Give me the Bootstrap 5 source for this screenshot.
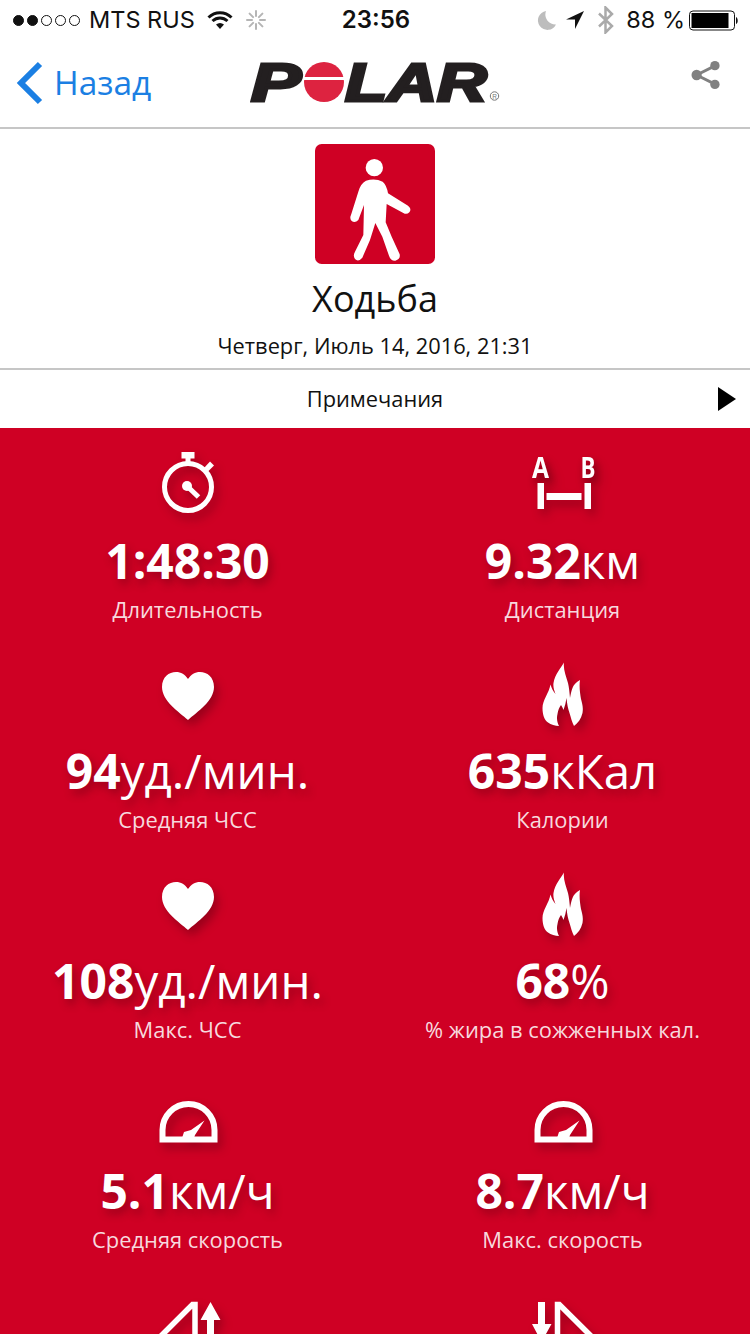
<!DOCTYPE html>
<html lang="ru">
<head>
  <meta charset="UTF-8">
  <title>Polar - Ходьба</title>
  <link href="https://cdn.jsdelivr.net/npm/bootstrap@5.3.0/dist/css/bootstrap.min.css" rel="stylesheet">
  <style>
    html, body {
      height: 1334px;
      overflow: hidden;
    }
    body {
      font-family: "Open Sans", "Liberation Sans", sans-serif;
      color: #111;
      background-color: #fff;
    }
    .status-bar {
      height: 40px;
      padding: 0 11px 0 13px;
      font-family: Inter, "Liberation Sans", sans-serif;
      font-size: 23.5px;
      color: #111;
    }
    .status-side {
      flex: 1 1 0;
    }
    .status-time {
      font-weight: 600;
      font-size: 24px;
    }
    .signal-dot {
      width: 11px;
      height: 11px;
      margin-right: 3px;
      border: 1px solid #111;
      border-radius: 50%;
    }
    .signal-dot.on {
      background-color: #111;
    }
    .carrier-name {
      margin-left: 6px;
    }
    .wifi-icon {
      margin-left: 12px;
    }
    .spin-icon {
      margin-left: 13px;
    }
    .bt-icon {
      margin-left: 12px;
    }
    .battery-pct {
      margin-left: 11px;
    }
    .top-nav {
      height: 89px;
      padding: 0 29px 2px 16px;
      border-bottom: 2px solid #c6c6c6;
    }
    .back-link {
      width: 234px;
      flex: none;
      font-size: 33.5px;
      color: #1b7fe3;
      text-decoration: none;
    }
    .polar-logo {
      flex: none;
    }
    .share-icon {
      margin-bottom: 16px;
    }
    .activity-head {
      height: 239px;
      padding-top: 15px;
    }
    .activity-icon {
      width: 120px;
      height: 120px;
      display: block;
    }
    .activity-name {
      margin: 12px 0 0;
      font-size: 36px;
      line-height: 46px;
      font-weight: 400;
    }
    .activity-date {
      margin-top: 9px;
      font-size: 21.8px;
      line-height: 30px;
    }
    .notes-row {
      height: 60px;
      padding-right: 14px;
      border-top: 2px solid #c6c6c6;
      font-size: 21.8px;
    }
    .notes-label {
      left: 0;
      right: 0;
      margin-top: 1px;
    }
    .notes-arrow {
      width: 0;
      height: 0;
      border-top: 12px solid transparent;
      border-bottom: 12px solid transparent;
      border-left: 18px solid #000;
    }
    .metrics {
      height: 906px;
      overflow: hidden;
      background-color: #cf0024;
      color: #fff;
      text-shadow: 3px 5px 8px rgba(90, 0, 15, .45);
    }
    .metric {
      height: 210px;
      padding-top: 22px;
    }
    .metric-icon {
      display: block;
      width: 70px;
      height: 84px;
      margin: 0 auto -2px;
      overflow: visible;
      filter: drop-shadow(4px 6px 5px rgba(90, 0, 15, .45));
    }
    .metric-value {
      font-size: 48px;
      line-height: 58px;
      font-weight: 700;
      white-space: nowrap;
    }
    .metric-unit {
      font-size: 47.5px;
      font-weight: 400;
    }
    .metric-label {
      font-size: 21.9px;
      line-height: 40px;
      color: #f7d9de;
      text-shadow: none;
      white-space: nowrap;
    }
  </style>
</head>
<body>

  <div class="status-bar d-flex align-items-center">
    <div class="status-side d-flex align-items-center">
      <span class="signal-dot on"></span><span class="signal-dot on"></span><span class="signal-dot"></span><span class="signal-dot"></span><span class="signal-dot"></span>
      <span class="carrier-name">MTS RUS</span>
      <svg class="wifi-icon" width="26" height="20" viewBox="0 0 26 20"><path d="M1.500 7.500C8 1 18 1 24.500 7.500M5.500 11C10 7 16 7 20.500 11" fill="none" stroke="#111" stroke-width="3"/><path d="M9 14.500C11.500 12.500 14.500 12.500 17 14.500L13 19Z" fill="#111"/></svg>
      <svg class="spin-icon" width="20" height="20" viewBox="0 0 20 20" stroke="#b5b5b5" stroke-width="2" stroke-linecap="round"><path d="M10 1v5M10 14v5M1 10h5M14 10h5M3.600 3.600l3.500 3.500M12.900 12.900l3.500 3.500M3.600 16.400l3.500-3.500M12.900 7.100l3.500-3.500"/></svg>
    </div>
    <div class="status-time">23:56</div>
    <div class="status-side d-flex align-items-center justify-content-end">
      <svg width="20" height="20" viewBox="0 0 20 20"><path d="M9 1a9.500 9.500 0 1 0 10 13.500A10 10 0 0 1 9 1Z" fill="#bdbdbd"/></svg>
      <svg class="ms-2" width="20" height="20" viewBox="0 0 20 20"><path d="M19 1 1 9.500h9v9.500L19 1Z" fill="#111"/></svg>
      <svg class="bt-icon" width="18" height="28" viewBox="0 0 18 28"><path d="M2 7.500 15 20 8.500 26.500V1.500L15 8 2 20.500" fill="none" stroke="#aaa" stroke-width="2.500"/></svg>
      <span class="battery-pct">88 %</span>
      <svg class="ms-1" width="50" height="21" viewBox="0 0 50 21"><rect x=".5" y="1" width="45" height="19" rx="3.500" fill="none" stroke="#111"/><rect x="2.500" y="3" width="37" height="15" fill="#000"/><path d="M47 7c2 .5 2.500 6.500 0 7Z" fill="#111"/></svg>
    </div>
  </div>

  <nav class="top-nav d-flex align-items-center">
    <a class="back-link d-flex align-items-center" href="#">
      <svg class="me-2" width="30" height="46" viewBox="0 0 30 46"><path d="M24 4 5 23l19 19" fill="none" stroke="#1b7fe3" stroke-width="6"/></svg>
      Назад
    </a>
    <svg class="polar-logo" width="252" height="64" viewBox="0 -10 252 64">
      <g font-family="Liberation Sans, sans-serif" font-weight="700" font-style="italic" font-size="54" fill="#231f20" stroke="#231f20" stroke-width="3">
        <text x="1" y="40" textLength="50" lengthAdjust="spacingAndGlyphs">P</text>
        <text x="95" y="40" textLength="142" lengthAdjust="spacingAndGlyphs">LAR</text>
      </g>
      <circle cx="74" cy="21" r="20" fill="#dd2340"/>
      <rect x="54" y="16" width="40" height="3" fill="#fff"/>
      <circle cx="244.500" cy="35" r="4.200" fill="none" stroke="#777"/>
      <text x="244.500" y="37.500" text-anchor="middle" font-family="Liberation Sans, sans-serif" font-size="6.500" fill="#777">R</text>
    </svg>
    <div class="flex-fill d-flex justify-content-end">
      <svg class="share-icon" width="30" height="30" viewBox="0 0 32 32"><path d="M26 6 6 16l20 10" fill="none" stroke="#808080" stroke-width="3"/><circle cx="25.500" cy="6" r="5" fill="#808080"/><circle cx="6" cy="16" r="5.500" fill="#808080"/><circle cx="25.500" cy="26" r="5" fill="#808080"/></svg>
    </div>
  </nav>

  <header class="activity-head d-flex flex-column align-items-center text-center">
    <svg class="activity-icon" viewBox="75 27 360 360">
      <rect x="75" y="27" width="360" height="360" rx="20" fill="#cf0024"/>
      <circle cx="253" cy="98" r="26" fill="#fff"/>
      <path d="M228 137Q255 128 278 140 290 150 294 175L354 212Q366 222 358 232 350 240 340 234L290 207 287 262 305 305 329 358Q332 372 316 377 302 378 297 362L277 305 256 264 240 315 217 368Q205 382 195 372 188 362 195 350L220 300 222 210 205 255Q195 265 185 258 178 250 183 240L205 170Q212 145 228 137Z" fill="#fff"/>
    </svg>
    <h1 class="activity-name">Ходьба</h1>
    <div class="activity-date">Четверг, Июль 14, 2016, 21:31</div>
  </header>

  <div class="notes-row position-relative d-flex align-items-center justify-content-end">
    <span class="notes-label position-absolute text-center">Примечания</span>
    <span class="notes-arrow"></span>
  </div>

  <main class="metrics">
    <div class="row g-0 text-center">
      <div class="col-6 metric">
        <svg class="metric-icon" viewBox="0 0 70 84">
          <g fill="#fff"><rect x="28.500" y="2" width="13" height="6.500"/><rect x="32.500" y="8" width="5" height="7"/>
          <path d="M51 18l6-6.500 4 4-6 6Z"/><circle cx="34" cy="36" r="5"/></g>
          <circle cx="35" cy="37" r="23.500" fill="none" stroke="#fff" stroke-width="5"/>
          <path d="M35 37 45.500 47" stroke="#fff" stroke-width="5"/>
        </svg>
        <div class="metric-value">1:48:30</div>
        <div class="metric-label">Длительность</div>
      </div>
      <div class="col-6 metric">
        <svg class="metric-icon" viewBox="0 0 70 84">
          <text x="12.500" y="28" text-anchor="middle" font-family="Open Sans, sans-serif" font-weight="700" font-size="29" fill="#fff" textLength="17" lengthAdjust="spacingAndGlyphs">A</text>
          <text x="60" y="28" text-anchor="middle" font-family="Open Sans, sans-serif" font-weight="700" font-size="29" fill="#fff" textLength="15" lengthAdjust="spacingAndGlyphs">B</text>
          <path d="M9.500 33h6.500v26H9.500ZM56.500 33H63v26h-6.500ZM18.500 43H53.500v7H18.500Z" fill="#fff"/>
        </svg>
        <div class="metric-value">9.32<span class="metric-unit">км</span></div>
        <div class="metric-label">Дистанция</div>
      </div>
      <div class="col-6 metric">
        <svg class="metric-icon" viewBox="0 0 70 84">
          <path d="M35 60C26 52 9 41 9 27 9 17 16 12 23 12c5 0 9 2.500 12 7 3-4.500 7-7 12-7 7 0 14 5 14 15 0 14-17 25-26 33Z" fill="#fff"/>
        </svg>
        <div class="metric-value">94<span class="metric-unit">уд./мин.</span></div>
        <div class="metric-label">Средняя ЧСС</div>
      </div>
      <div class="col-6 metric">
        <svg class="metric-icon" viewBox="0 0 70 84">
          <path d="M36 2.500C33 8 27 14 25.500 23 25 27 26 30 27.500 34 25 31 23.500 28 22.500 24.500 21 33 14.500 40 14.500 48 14.500 55 16.500 60 20 62.500 23 64.500 27 66 31 66 29 62 28.500 58 29.500 54 30 50 31.500 47 33 45 34 47 35 48 35.500 50 37 46 38 42 38.500 38 39 44 40 49 41.500 53 43 58 44 62 46 66 50 63 53 59 54.500 53 55.500 47 54 43 53 39 52 33 51 26 52 20 48 22 45.500 25 44.500 28 43 32 42.500 35 42 38 41.500 32 41 27 40 23 38 16 35 9 36 2.500Z" fill="#fff"/>
        </svg>
        <div class="metric-value">635<span class="metric-unit">кКал</span></div>
        <div class="metric-label">Калории</div>
      </div>
      <div class="col-6 metric">
        <svg class="metric-icon" viewBox="0 0 70 84">
          <path d="M35 60C26 52 9 41 9 27 9 17 16 12 23 12c5 0 9 2.500 12 7 3-4.500 7-7 12-7 7 0 14 5 14 15 0 14-17 25-26 33Z" fill="#fff"/>
        </svg>
        <div class="metric-value">108<span class="metric-unit">уд./мин.</span></div>
        <div class="metric-label">Макс. ЧСС</div>
      </div>
      <div class="col-6 metric">
        <svg class="metric-icon" viewBox="0 0 70 84">
          <path d="M36 2.500C33 8 27 14 25.500 23 25 27 26 30 27.500 34 25 31 23.500 28 22.500 24.500 21 33 14.500 40 14.500 48 14.500 55 16.500 60 20 62.500 23 64.500 27 66 31 66 29 62 28.500 58 29.500 54 30 50 31.500 47 33 45 34 47 35 48 35.500 50 37 46 38 42 38.500 38 39 44 40 49 41.500 53 43 58 44 62 46 66 50 63 53 59 54.500 53 55.500 47 54 43 53 39 52 33 51 26 52 20 48 22 45.500 25 44.500 28 43 32 42.500 35 42 38 41.500 32 41 27 40 23 38 16 35 9 36 2.500Z" fill="#fff"/>
        </svg>
        <div class="metric-value">68<span class="metric-unit">%</span></div>
        <div class="metric-label">% жира в сожженных кал.</div>
      </div>
      <div class="col-6 metric">
        <svg class="metric-icon" viewBox="0 0 70 84">
          <path d="M9.500 59.500V50a26 26 0 0 1 52 0v9.500Z" fill="none" stroke="#fff" stroke-width="6"/>
          <path d="M29 58l2-6 7-2 13.500-9.500L42 55l-1 3Z" fill="#fff"/>
        </svg>
        <div class="metric-value">5.1<span class="metric-unit">км/ч</span></div>
        <div class="metric-label">Средняя скорость</div>
      </div>
      <div class="col-6 metric">
        <svg class="metric-icon" viewBox="0 0 70 84">
          <path d="M9.500 59.500V50a26 26 0 0 1 52 0v9.500Z" fill="none" stroke="#fff" stroke-width="6"/>
          <path d="M29 58l2-6 7-2 13.500-9.500L42 55l-1 3Z" fill="#fff"/>
        </svg>
        <div class="metric-value">8.7<span class="metric-unit">км/ч</span></div>
        <div class="metric-label">Макс. скорость</div>
      </div>
      <div class="col-6 metric">
        <svg class="metric-icon" viewBox="0 0 70 84">
          <path d="M42 14.500H39.500L4 50v33h38Z" fill="none" stroke="#fff" stroke-width="5.500"/>
          <path d="M57.500 12 67.500 30H61v54h-7V30h-6.500Z" fill="#fff"/>
        </svg>
      </div>
      <div class="col-6 metric">
        <svg class="metric-icon" viewBox="0 0 70 84">
          <path d="M29.500 14.500H31.300L67 50v33H29.500Z" fill="none" stroke="#fff" stroke-width="5.500"/>
          <path d="M10 12h7V34h6.500L13.500 52 4 34h6Z" fill="#fff"/>
        </svg>
      </div>
    </div>
  </main>

</body>
</html>
